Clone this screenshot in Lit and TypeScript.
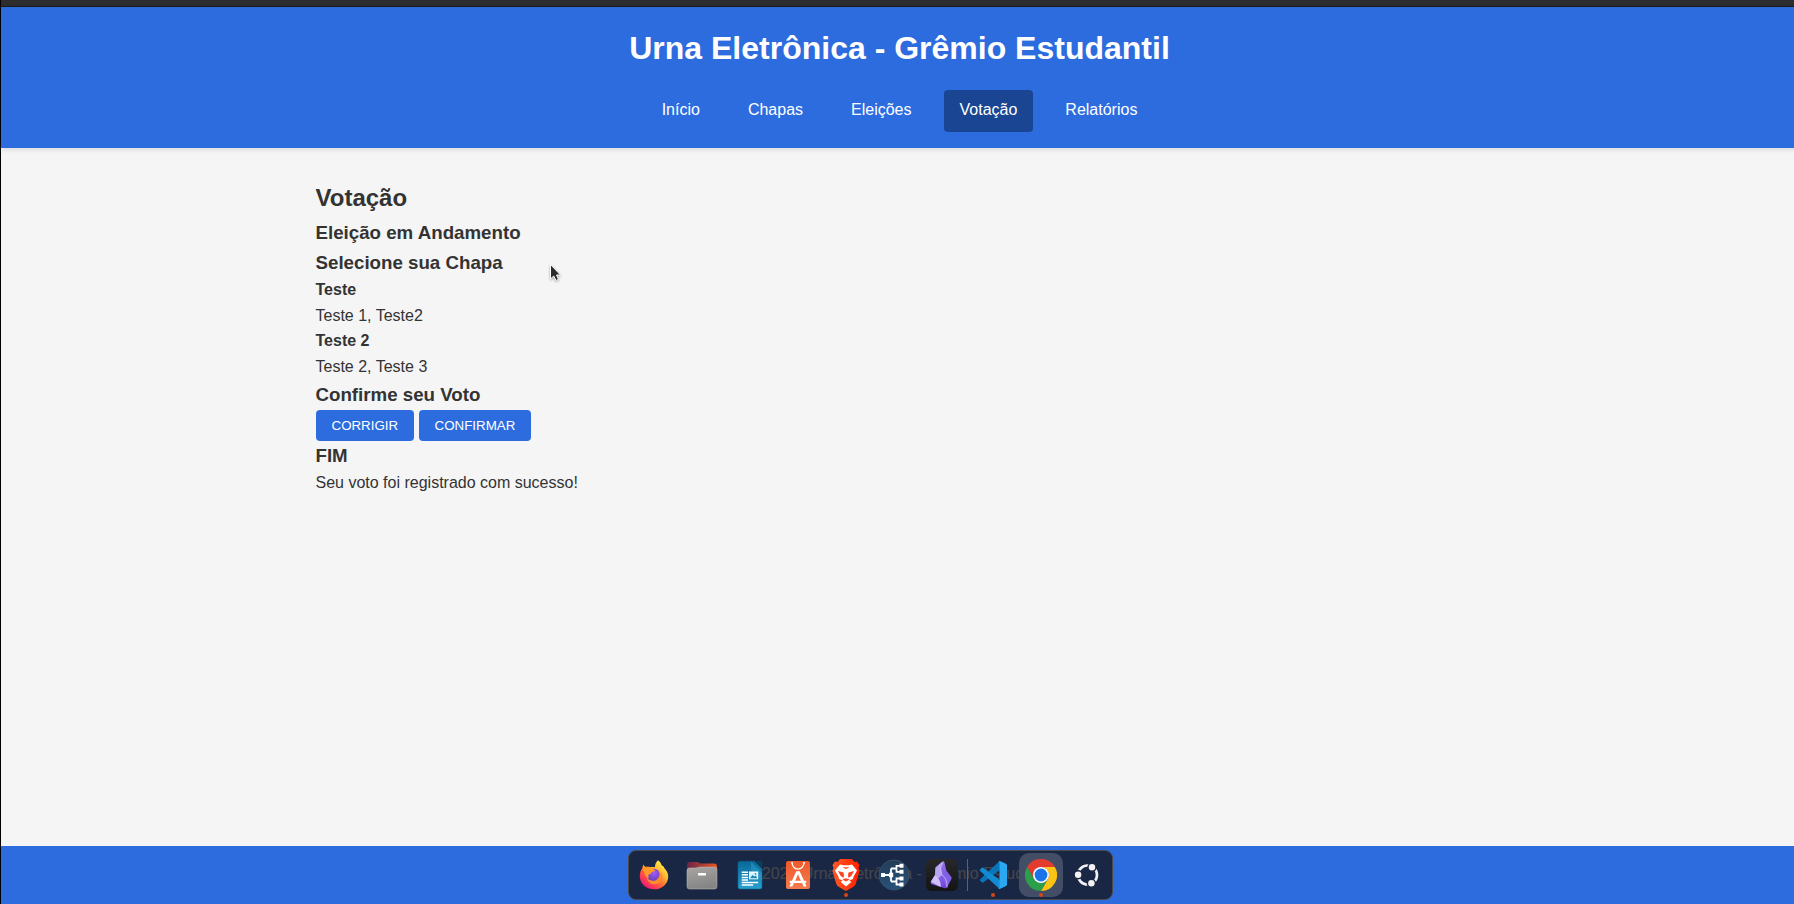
import { LitElement, html, css, svg } from "lit";
import { customElement, property } from "lit/decorators.js";
import { classMap } from "lit/directives/class-map.js";

const icons: Record<string, unknown> = {
  firefox: svg`
    <defs>
      <linearGradient id="ff-body" x1="0.85" y1="0.1" x2="0.2" y2="0.95">
        <stop offset="0" stop-color="#fff14a" /><stop offset="0.35" stop-color="#ffb02e" />
        <stop offset="0.65" stop-color="#ff5a3c" /><stop offset="1" stop-color="#f0147a" />
      </linearGradient>
      <radialGradient id="ff-globe" cx="0.5" cy="0.3" r="0.7">
        <stop offset="0" stop-color="#a35bf5" /><stop offset="1" stop-color="#5b3bb5" />
      </radialGradient>
    </defs>
    <path fill="url(#ff-body)" d="M20 1.300c2.200 1.600 3.200 3.300 3.700 5.200 1.200.2 2.100 1.200 2.600 2.500 2.400 2.600 3.900 5.100 3.900 8.400C30.200 24.800 24.100 30.300 16 30.300S1.800 24.500 1.800 17c0-3.200 1-6 2.600-8 .1-1.600.5-2.700 1.200-3.600.5 1.300 1.200 2.100 2 2.500 1.800-.7 3.500-.6 5 0 1.700-.6 3.300-.4 4.300.3.1-2.800 1.100-5.200 3.100-6.900z" />
    <path fill="#1a2744" d="M8.500 7.600c2-2 5-2.600 7.800-1.800l.2 2.200c-2.500-.3-5.200-.6-8-.4z" />
    <circle cx="15.800" cy="16.600" r="6.900" fill="url(#ff-globe)" />
    <path fill="#ff9a26" d="M5.600 6.200c.8 1.600 1.800 2.200 3.200 2.200 2-.6 4-.2 5.200 1.200 1.200.3 2.300 1.200 3.300 2-.7.9-2 1.200-3.300 1.400-.4 1.300-1.800 1.700-3.200 2.400-.8.600-.6 2.400.2 3.800-2.500-.8-4.200-2.700-4.500-5.300-1.800-2.300-2-5.200-.9-7.700z" />
    <path fill="#ff8a30" d="M9 17.500c.8 4.200 6.500 5.200 9.300 3.400 3.200-1.900 4-5.900 1.900-8.800 4.200 1.200 5.300 5.700 3.800 9-2 4.200-7.600 5.400-11.200 3.400C10.200 23 8.600 20.300 9 17.500z" />`,
  files: svg`
    <defs>
      <linearGradient id="fl-back"><stop offset="0" stop-color="#6b2448" /><stop offset="1" stop-color="#e95420" /></linearGradient>
      <linearGradient id="fl-front" x2="0.3" y2="1"><stop offset="0" stop-color="#aaa5a3" /><stop offset="1" stop-color="#858585" /></linearGradient>
    </defs>
    <path fill="url(#fl-back)" d="M1 6a3 3 0 0 1 3-3h7c1.700 0 2 1.500 3.600 1.500H28a3 3 0 0 1 3 3V20H1z" />
    <path fill="url(#fl-front)" stroke="#c4bdb8" stroke-width=".5" d="M1 11.500a2.500 2.500 0 0 1 2.500-2.500h6c1.700 0 2.500-1 4-1H28.500A2.500 2.500 0 0 1 31 10.500V27.500a2.500 2.500 0 0 1-2.500 2.500h-25A2.500 2.500 0 0 1 1 27.500z" />
    <rect x="12" y="14" width="8" height="2.400" rx=".5" fill="#fff" />`,
  writer: svg`
    <defs><linearGradient id="wr" x2="0" y2="1"><stop offset="0" stop-color="#08699a" /><stop offset="1" stop-color="#279fce" /></linearGradient></defs>
    <path fill="url(#wr)" stroke="#0b668e" stroke-width=".6" d="M6 2.300h14.500L28 10v18a2 2 0 0 1-2 2H6a2 2 0 0 1-2-2V4.300a2 2 0 0 1 2-2z" />
    <path d="M17 2.500 28 14v8L17 11z" fill="#3cb2de" opacity=".35" />
    <path d="M21.500 2H27a1.300 1.300 0 0 1 1.300 1.300V9z" fill="#06425f" />
    <path stroke="#fff" stroke-width="1.500" d="M7.700 13.200H14M7.700 15.800H14M7.700 18.400H14M7.700 21h6.300M7.700 23.500h16.500M7.700 26h11.500" />
    <rect x="15.500" y="13" width="8.200" height="6.800" fill="#d8f2ff" stroke="#fff" stroke-width="1" />
    <path d="m16 19.300 2.500-3.300 2 1.500 1.300-1 1.500 2.800z" fill="#168ac0" /><circle cx="21.500" cy="14.900" r=".8" fill="#168ac0" />`,
  software: svg`
    <defs><linearGradient id="sw" x2="0" y2="1"><stop offset="0" stop-color="#f0592a" /><stop offset="1" stop-color="#f47b4e" /></linearGradient></defs>
    <rect x="4" y="2" width="24" height="28" rx="2" fill="url(#sw)" />
    <path d="M10 3.500a6 6.700 0 0 0 12 0" fill="none" stroke="#fff" stroke-width="1.200" />
    <circle cx="10" cy="3.800" r=".9" fill="#fff" /><circle cx="22" cy="3.800" r=".9" fill="#fff" />
    <path fill="#fff" fill-rule="evenodd" d="M14.300 12.200h3.400L22 21.700h2.200v2.400h-1.100l1.500 3.500h-3l-1.500-3.500h-8.200l-1.500 3.500h-3l1.500-3.500H7.800v-2.400H10zM16 15.300l-2.800 6.400h5.600z" />`,
  brave: svg`
    <defs><linearGradient id="br"><stop offset="0" stop-color="#ff5926" /><stop offset="1" stop-color="#ff2100" /></linearGradient></defs>
    <path fill="url(#br)" d="m10 0h12l2.500 3 2.500-.4L29.500 6 28.500 9l1 3-3.500 12c-.5 2-1.500 3-3 4L16 32l-7-4c-1.500-1-2.500-2-3-4L2.500 12l1-3-1-3L5 2.600 7.500 3z" />
    <path fill="#fff" d="m10 5.500 3.500.8h5l3.500-.8 5 6-2.300 4.200c-.7 1.300-1.700 1.800-1.200 3.100-.6 2-2.500 2.200-4.200 2.300l2 2L16 27.500 10.700 23.100l2-2c-1.700-.1-3.600-.3-4.200-2.300.5-1.300-.5-1.800-1.200-3.100L5 11.500z" />
    <path fill="#ff4320" d="m8 12 5.500 1.400.5 2.500-.5 3-3-2.200zm16 0-5.500 1.400-.5 2.500.5 3 3-2.200zM12.500 8.200h7L16 10zM12.300 20.600l3.700-1.400 3.700 1.400L16 22.500z" />`,
  tree: svg`
    <defs><linearGradient id="tr" x2="0" y2="1"><stop offset="0" stop-color="#233c57" /><stop offset="1" stop-color="#28527a" /></linearGradient></defs>
    <circle cx="16" cy="16" r="15" fill="url(#tr)" stroke="#36506c" stroke-width="1" />
    <path d="M5 16h8M13 9.500v13M13 9.500h5.500M13 22.500h5.500M23 6.800h-4.500v6H23M23 19.500h-4.500v6H23" fill="none" stroke="#fff" stroke-width="1.800" />
    <path fill="#fff" d="M3 14h4v4H3zM11 13.800h4.200v4.400H11zM21.500 4.800h4v4h-4zM21.500 10.800h4v4h-4zM21.500 17.500h4v4h-4zM21.500 23.500h4v4h-4z" />`,
  obsidian: svg`
    <defs>
      <linearGradient id="ob-bg" x2="0" y2="1"><stop offset="0" stop-color="#28282a" /><stop offset="1" stop-color="#141415" /></linearGradient>
      <linearGradient id="ob-gem" x2="0.8" y2="1"><stop offset="0" stop-color="#a58bed" /><stop offset="1" stop-color="#6c3ddc" /></linearGradient>
    </defs>
    <rect width="32" height="32" rx="5.500" fill="url(#ob-bg)" />
    <path fill="url(#ob-gem)" d="m9.500 8.500 7-6c.8-.5 1.600-.2 1.900.7L20.500 12l4.700 6c.8 1.200.6 2-.2 3l-4 7c-.7 1.200-1.700 1.400-3 1L6.500 25.500c-1.400-.5-2.100-1.400-1.700-2.500L9 16z" />
    <path fill="#b8a5f3" d="m9.500 8.500 7-6L14.500 9l1.500 7-4.500 4L9 16z" />
    <path fill="#8260e5" d="m16 16 4.500-4 5 6.500L21 28.500l-3.500-6.500z" />
    <path fill="#cfc0fa" d="M9 16l-4.200 6.800L14.500 28c.8-3-.5-8-5.500-12z" />
    <path d="m17 3-2.500 6 1.500 7c3 2 5 5 5 12.500" fill="none" stroke="#e0d6ff" stroke-width=".6" />`,
  code: svg`
    <path fill="#0875b8" d="M29 4.500 22.500 2 3.200 20.200c-.5.500-.5 1.100 0 1.600l1.600 1.500c.4.400 1 .4 1.500.1L29 6.200z" />
    <path fill="#118bd1" d="M29 26.800 22.500 30 3.200 11.900c-.5-.5-.5-1.200 0-1.600l1.600-1.500c.4-.4 1-.4 1.500-.1L29 25.500z" />
    <path fill="#2aa8f2" d="M22.500 30c-.8.300-1.600 0-2-.5.800.8 2 .2 2-.9V3.400c0-1.100-1.200-1.700-2-.9.500-.5 1.200-.8 2-.5L29 5c.8.400 1 .9 1 1.600v18.800c0 .7-.3 1.200-1 1.600z" />`,
  chrome: svg`
    <path fill="#e33b2e" d="M2.140 8a16 16 0 0 1 27.720 0H16l-6.930 12z" />
    <path fill="#fcc315" d="M29.860 8A16 16 0 0 1 16 32l6.930-12A8 8 0 0 0 16 8z" />
    <path fill="#2c9f4b" d="M16 32A16 16 0 0 1 2.140 8l6.930 12A8 8 0 0 0 22.930 20z" />
    <circle cx="16" cy="16" r="8" fill="#fff" /><circle cx="16" cy="16" r="6.400" fill="#1a73e8" />`,
  ubuntu: svg`
    <circle cx="14.500" cy="16" r="9.500" fill="none" stroke="#f2f2f4" stroke-width="2.600" />
    <g fill="#f2f2f4" stroke="#1a2744" stroke-width="1.500">
      <circle cx="5.100" cy="15.700" r="4" /><circle cx="19" cy="8.300" r="4" /><circle cx="18.400" cy="24.300" r="4" />
    </g>`,
};

@customElement("dock-item")
class DockItem extends LitElement {
  @property() icon = "";
  @property({ type: Boolean }) running = false;
  @property({ type: Boolean }) current = false;

  static styles = css`
    :host { display: block; flex: none; }
    .item {
      position: relative; width: 44px; height: 44px; border-radius: 10px;
      display: flex; align-items: center; justify-content: center;
    }
    .current { background: #434e66; }
    .running::after {
      content: ""; position: absolute; left: 20px; bottom: 0;
      width: 4px; height: 4px; border-radius: 50%; background: #d34615;
    }
    svg { display: block; width: 32px; height: 32px; }
  `;

  render() {
    return html`<div class=${classMap({ item: true, current: this.current, running: this.running })}>
      <svg viewBox="0 0 32 32">${icons[this.icon]}</svg>
    </div>`;
  }
}

@customElement("app-root")
class AppRoot extends LitElement {
  static styles = css`
    :host {
      display: block; position: relative; width: 100%; height: 904px; overflow: hidden;
      box-sizing: border-box; border-left: 1px solid #000;
      font: 16px/1.6 "Liberation Sans", Arial, sans-serif; color: #333; background: #f5f5f5;
    }
    * { box-sizing: border-box; margin: 0; padding: 0; }
    .window { width: 1797px; height: 904px; display: flex; flex-direction: column; }
    .titlebar { flex: none; height: 7px; background: #2d2d2d; border-bottom: 1px solid #1b1b1b; }
    header { flex: none; background: #2d6cdf; color: #fff; padding: 16px; text-align: center; box-shadow: 0 2px 5px rgba(0, 0, 0, 0.1); }
    h1 { font-size: 32px; margin-bottom: 16px; }
    nav { display: flex; justify-content: center; gap: 16px; }
    nav a { color: #fff; padding: 7px 16px 9px; border-radius: 4px; }
    nav .active { background: #1a4593; }
    main { flex: 1; width: 1200px; margin: 32px auto 0; padding: 0 16px; }
    h2, h4, p { margin-top: -1px; padding-bottom: 1px; }
    button {
      font: 13.3333px "Liberation Sans", Arial, sans-serif; text-transform: uppercase;
      color: #fff; background: #2d6cdf; border: none; border-radius: 4px; padding: 8px 16px;
    }
    footer { flex: none; background: #2d6cdf; color: #fff; text-align: center; padding: 16px; }
    .dock {
      position: absolute; left: 627px; top: 850px; width: 485px; height: 50px;
      display: flex; align-items: center; gap: 4px; padding-left: 3px;
      background: rgba(21, 22, 29, 0.8); border: 1px solid #4b4a48; border-radius: 8px;
    }
    .separator { flex: none; width: 1px; height: 32px; margin: 0 -1px; background: #56617a; }
    .pointer { position: absolute; left: 547px; top: 263px; width: 16px; height: 22px; filter: drop-shadow(0 1px 1px rgba(0, 0, 0, 0.35)); }
  `;

  render() {
    return html`
      <div class="window">
        <div class="titlebar"></div>
        <header>
          <h1>Urna Eletrônica - Grêmio Estudantil</h1>
          <nav>
            ${["Início", "Chapas", "Eleições", "Votação", "Relatórios"].map(
              (label) => html`<a class=${classMap({ active: label === "Votação" })}>${label}</a>`
            )}
          </nav>
        </header>
        <main>
          <h2>Votação</h2>
          <h3>Eleição em Andamento</h3>
          <h3>Selecione sua Chapa</h3>
          <h4>Teste</h4>
          <p>Teste 1, Teste2</p>
          <h4>Teste 2</h4>
          <p>Teste 2, Teste 3</p>
          <h3>Confirme seu Voto</h3>
          <button>Corrigir</button>
          <button>Confirmar</button>
          <h3>FIM</h3>
          <p>Seu voto foi registrado com sucesso!</p>
        </main>
        <footer><p>© 2025 Urna Eletrônica - Grêmio Estudantil</p></footer>
      </div>
      <div class="dock">
        <dock-item icon="firefox"></dock-item>
        <dock-item icon="files"></dock-item>
        <dock-item icon="writer"></dock-item>
        <dock-item icon="software"></dock-item>
        <dock-item icon="brave" running></dock-item>
        <dock-item icon="tree"></dock-item>
        <dock-item icon="obsidian"></dock-item>
        <div class="separator"></div>
        <dock-item icon="code" running></dock-item>
        <dock-item icon="chrome" running current></dock-item>
        <dock-item icon="ubuntu"></dock-item>
      </div>
      <svg class="pointer" viewBox="0 0 16 22">
        <path d="M2.500 1.500v14.500l3.200-3 2.300 4.500 2.500-1.200-2-4.300h4z" fill="#2b2b2b" stroke="#fff" stroke-width="1" />
      </svg>
    `;
  }
}
